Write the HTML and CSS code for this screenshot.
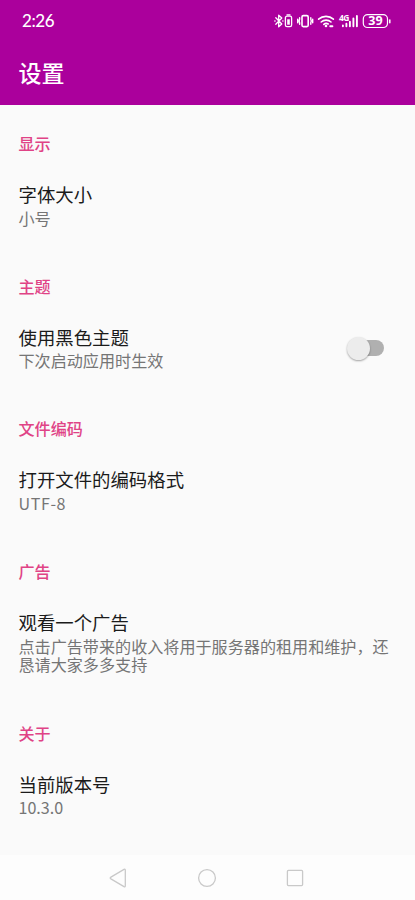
FILE: index.html
```html
<!DOCTYPE html>
<html lang="zh-CN">
<head>
<meta charset="utf-8">
<title>设置</title>
<link rel="stylesheet" href="styles.css">
</head>
<body>
<div class="screen">
  <header class="top">
    <div class="status">
      <span class="clock">2:26</span>
      <svg class="status-icons" viewBox="0 0 120 20" fill="none" stroke="#fff" stroke-width="1.3" stroke-linecap="round" stroke-linejoin="round">
        <path d="M1.8 6.8l6 6.2-3.1 2.8V4.2l3.1 2.8-6 6.2M.8 10h.3M8.8 10h.2"/>
        <rect x="11.4" y="5.200" width="6.200" height="10.400" rx="1.600"/>
        <path d="M13 3.800h3"/>
        <rect x="13.200" y="8.300" width="2.600" height="5.400" fill="#fff" stroke="none"/>
        <rect x="28" y="4.600" width="6.200" height="11" rx="1.300" stroke-width="1.600"/>
        <path d="M25.600 6.800v1.500l-.5 1.700.5 1.700v1.600M36.800 6.800v1.500l.5 1.700-.5 1.700v1.600M23.700 8.300v3.400M38.700 8.300v3.400" stroke-width="1.400"/>
        <path d="M44.600 8.200a11 11 0 0 1 14.800 0M47.200 11a7.200 7.200 0 0 1 9.800 0M49.800 13.400a3.600 3.600 0 0 1 4.400-.4" stroke-width="1.600"/>
        <circle cx="52" cy="15" r="1.300" fill="#fff" stroke="none"/>
        <path d="M56.200 15.200h2.200" stroke-width="1.900"/>
        <text class="net" x="65" y="9.600">4G</text>
        <path d="M68.900 15.300v-.8M72.400 15.300v-2.600M75.900 15.300v-4.500M79.400 15.300V7.400M82.900 15.300V5" stroke-width="1.900"/>
        <rect x="89.300" y="3.700" width="24.200" height="12.800" rx="4.300" stroke-width="1.200"/>
        <path d="M115.800 8.900v2.800" stroke-width="1.500"/>
        <text class="level" x="101.400" y="14.300" text-anchor="middle">39</text>
      </svg>
    </div>
    <h1 class="app-title">设置</h1>
  </header>

  <main class="settings">
    <section class="group">
      <h2 class="group-name">显示</h2>
      <div class="item"><div class="label">
        <div class="name">字体大小</div>
        <div class="summary">小号</div>
      </div></div>
    </section>
    <section class="group">
      <h2 class="group-name">主题</h2>
      <div class="item">
        <div class="label">
          <div class="name">使用黑色主题</div>
          <div class="summary">下次启动应用时生效</div>
        </div>
        <div class="switch"><span class="thumb"></span></div>
      </div>
    </section>
    <section class="group">
      <h2 class="group-name">文件编码</h2>
      <div class="item"><div class="label">
        <div class="name">打开文件的编码格式</div>
        <div class="summary encoding">UTF-8</div>
      </div></div>
    </section>
    <section class="group">
      <h2 class="group-name">广告</h2>
      <div class="item"><div class="label">
        <div class="name">观看一个广告</div>
        <div class="summary">点击广告带来的收入将用于服务器的租用和维护，还恳请大家多多支持</div>
      </div></div>
    </section>
    <section class="group">
      <h2 class="group-name">关于</h2>
      <div class="item"><div class="label">
        <div class="name">当前版本号</div>
        <div class="summary">10.3.0</div>
      </div></div>
    </section>
  </main>

  <nav class="navbar">
    <svg viewBox="0 0 20 20"><path d="M1.900 9.100 15 1.400q1.300-.6 1.300.8v15.600q0 1.400-1.300.8L1.900 10.900q-1.400-.9 0-1.800z"/></svg>
    <svg viewBox="0 0 20 20"><circle cx="10" cy="10" r="8.400"/></svg>
    <svg viewBox="0 0 20 20"><rect x="2.400" y="2.400" width="15.200" height="15.200" rx="1"/></svg>
  </nav>
</div>
</body>
</html>
```

FILE: styles.css
```css
* { box-sizing: border-box; }

body {
  margin: 0;
  background: #fafafa;
  font-family: "Noto Sans CJK SC", sans-serif;
}

.screen {
  display: flex;
  flex-direction: column;
  height: 900px;
  overflow: hidden;
}

.top {
  flex: none;
  height: 105px;
  background: #ab009c;
  color: #fff;
}

.status {
  display: flex;
  justify-content: space-between;
  align-items: center;
  height: 41px;
  padding: 0 22px;
}

.clock {
  font: 500 17px/20px Lato, sans-serif;
  letter-spacing: -.4px;
}

.status-icons {
  width: 120px;
  height: 20px;
  margin-right: -1px;
}

.status-icons text {
  fill: #fff;
  stroke: none;
  font-family: "Noto Sans", sans-serif;
  font-weight: 700;
}

.net { font-size: 8.500px; letter-spacing: -.5px; }
.level { font-size: 12.500px; }

.app-title {
  margin: 13px 0 0 18.500px;
  font-size: 23px;
  line-height: 36px;
  font-weight: 500;
}

.settings {
  flex: 1;
  min-height: 0;
  padding-top: 0;
}

.group { padding: 26px 18.500px 20.650px; }

.group-name {
  margin: 0 0 27px;
  color: #e04386;
  font-size: 16.100px;
  line-height: 24px;
  font-weight: 500;
}

.item {
  display: flex;
  align-items: center;
  justify-content: space-between;
}

.name {
  margin-bottom: 2.500px;
  color: #1b1b1b;
  font-size: 18.400px;
  line-height: 24px;
}

.summary {
  margin-right: -8px;
  color: #757575;
  font-size: 16.100px;
  line-height: 18.600px;
}

.encoding { letter-spacing: .6px; }

.switch {
  display: flex;
  align-items: center;
  width: 34px;
  height: 16px;
  margin: 2px 12.500px 0 0;
  border-radius: 8px;
  background: #b0b0b0;
}

.thumb {
  width: 23px;
  height: 23px;
  margin-left: -3px;
  border-radius: 50%;
  background: #ececec;
  box-shadow: 0 1px 2px rgba(0, 0, 0, .35);
}

.navbar {
  flex: none;
  display: flex;
  justify-content: center;
  align-items: center;
  gap: 68px;
  height: 45px;
  padding-right: 1px;
  background: #fdfdfd;
}

.navbar svg {
  width: 20px;
  height: 20px;
  fill: none;
  stroke: #c9c9c9;
  stroke-width: 1.300;
}
```
